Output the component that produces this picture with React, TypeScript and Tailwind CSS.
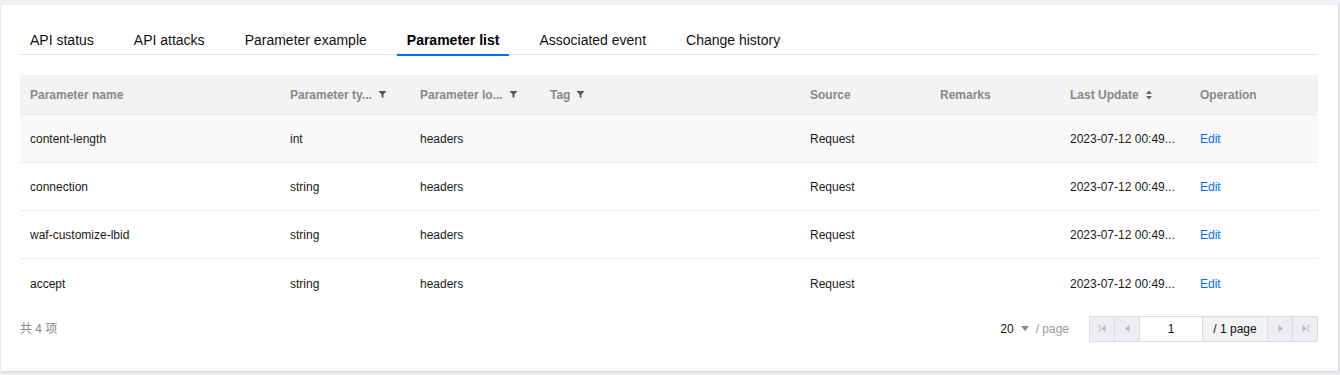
import React from "react";

const FilterIcon = () => (
  <svg width="9" height="9" viewBox="0 0 10 10" className="ml-[6px] shrink-0">
    <path d="M0.5 1 H9.5 L6 5 V9 L4 8 V5 Z" fill="#555" />
  </svg>
);

const SortIcon = () => (
  <svg width="8" height="10" viewBox="0 0 8 10" className="ml-[6px] shrink-0">
    <path d="M4 0.5 L7 4 H1 Z" fill="#666" />
    <path d="M4 9.5 L7 6 H1 Z" fill="#666" />
  </svg>
);

const tabs = [
  "API status",
  "API attacks",
  "Parameter example",
  "Parameter list",
  "Associated event",
  "Change history",
];

const cols: { label: string; w: string; icon?: "filter" | "sort" }[] = [
  { label: "Parameter name", w: "w-[260px]" },
  { label: "Parameter ty...", w: "w-[130px]", icon: "filter" },
  { label: "Parameter lo...", w: "w-[130px]", icon: "filter" },
  { label: "Tag", w: "w-[260px]", icon: "filter" },
  { label: "Source", w: "w-[130px]" },
  { label: "Remarks", w: "w-[130px]" },
  { label: "Last Update", w: "w-[130px]", icon: "sort" },
  { label: "Operation", w: "flex-1" },
];

const rows = [
  ["content-length", "int"],
  ["connection", "string"],
  ["waf-customize-lbid", "string"],
  ["accept", "string"],
];

const PagerBtn = ({ children }: { children: React.ReactNode }) => (
  <div className="w-[25px] h-full flex items-center justify-center bg-[#eceef2] border-r border-[#d9dde4]">
    {children}
  </div>
);

export default function App() {
  return (
    <div
      className="w-[1340px] h-[375px] bg-[#eef0f4] pt-[5px] pr-[2px] overflow-hidden"
      style={{ fontFamily: '"Liberation Sans", Arial, "Noto Sans CJK SC", sans-serif' }}
    >
      <div className="bg-white h-[366px] shadow-[inset_1px_0_0_#e6e8ec,1px_1px_2px_rgba(0,0,0,0.12)] pt-[20px] px-[20px]">
        {/* Tabs */}
        <div className="flex h-[30px] border-b border-[#e2e5ea]">
          {tabs.map((t) => {
            const active = t === "Parameter list";
            return (
              <div
                key={t}
                className={`relative px-[10px] mr-[20px] h-[30px] flex items-center text-[14px] ${
                  active ? "font-bold text-[#000]" : "text-[#111]"
                }`}
              >
                {t}
                {active && (
                  <div className="absolute left-0 right-0 bottom-[-1px] h-[2px] bg-[#006eff]" />
                )}
              </div>
            );
          })}
        </div>

        {/* Table */}
        <div className="mt-[20px] w-[1298px] text-[12px]">
          <div className="flex h-[40px] bg-[#f3f3f3] border-b border-[#ebebeb]">
            {cols.map((c) => (
              <div
                key={c.label}
                className={`${c.w} px-[10px] flex items-center font-bold text-[#888]`}
              >
                <span>{c.label}</span>
                {c.icon === "filter" && <FilterIcon />}
                {c.icon === "sort" && <SortIcon />}
              </div>
            ))}
          </div>
          {rows.map((r, i) => (
            <div
              key={r[0]}
              className={`flex h-[48px] border-b border-[#eeeeee] text-[#1a1a1a] ${
                i === 0 ? "bg-[#f9f9f9]" : "bg-white"
              } ${i === rows.length - 1 ? "border-b-0" : ""}`}
            >
              <div className="w-[260px] px-[10px] pt-[1px] flex items-center">{r[0]}</div>
              <div className="w-[130px] px-[10px] pt-[1px] flex items-center">{r[1]}</div>
              <div className="w-[130px] px-[10px] pt-[1px] flex items-center">headers</div>
              <div className="w-[260px] px-[10px] pt-[1px] flex items-center"></div>
              <div className="w-[130px] px-[10px] pt-[1px] flex items-center">Request</div>
              <div className="w-[130px] px-[10px] pt-[1px] flex items-center"></div>
              <div className="w-[130px] px-[10px] pt-[1px] flex items-center">2023-07-12 00:49...</div>
              <div className="flex-1 px-[10px] pt-[1px] flex items-center text-[#006eff]">Edit</div>
            </div>
          ))}
        </div>

        {/* Footer */}
        <div className="w-[1298px] h-[43px] flex items-center justify-between text-[12px]">
          <span className="text-[#888]">共 4 项</span>
          <div className="flex items-center">
            <span className="text-[#111]">20</span>
            <svg width="8" height="5" viewBox="0 0 8 5" className="ml-[7px]">
              <path d="M0 0 H8 L4 5 Z" fill="#888" />
            </svg>
            <span className="text-[#999] ml-[7px]">/ page</span>
            <div className="ml-[20px] flex h-[26px] border border-[#d9dde4] border-r-0">
              <PagerBtn>
                <svg width="7" height="7" viewBox="0 0 7 7">
                  <rect x="0" y="0" width="1.2" height="7" fill="#bbb" />
                  <path d="M6.5 0 V7 L2 3.5 Z" fill="#bbb" />
                </svg>
              </PagerBtn>
              <PagerBtn>
                <svg width="5" height="7" viewBox="0 0 5 7">
                  <path d="M4.5 0 V7 L0 3.5 Z" fill="#bbb" />
                </svg>
              </PagerBtn>
              <div className="w-[63px] h-full bg-white flex items-center justify-center text-[#111] border-r border-[#d9dde4]">
                1
              </div>
              <div className="w-[65px] h-full bg-[#f2f3f5] flex items-center justify-center text-[#111] border-r border-[#d9dde4]">
                / 1 page
              </div>
              <PagerBtn>
                <svg width="5" height="7" viewBox="0 0 5 7">
                  <path d="M0.5 0 V7 L5 3.5 Z" fill="#bbb" />
                </svg>
              </PagerBtn>
              <PagerBtn>
                <svg width="7" height="7" viewBox="0 0 7 7">
                  <path d="M0.5 0 V7 L5 3.5 Z" fill="#bbb" />
                  <rect x="5.8" y="0" width="1.2" height="7" fill="#bbb" />
                </svg>
              </PagerBtn>
            </div>
          </div>
        </div>
      </div>
    </div>
  );
}
